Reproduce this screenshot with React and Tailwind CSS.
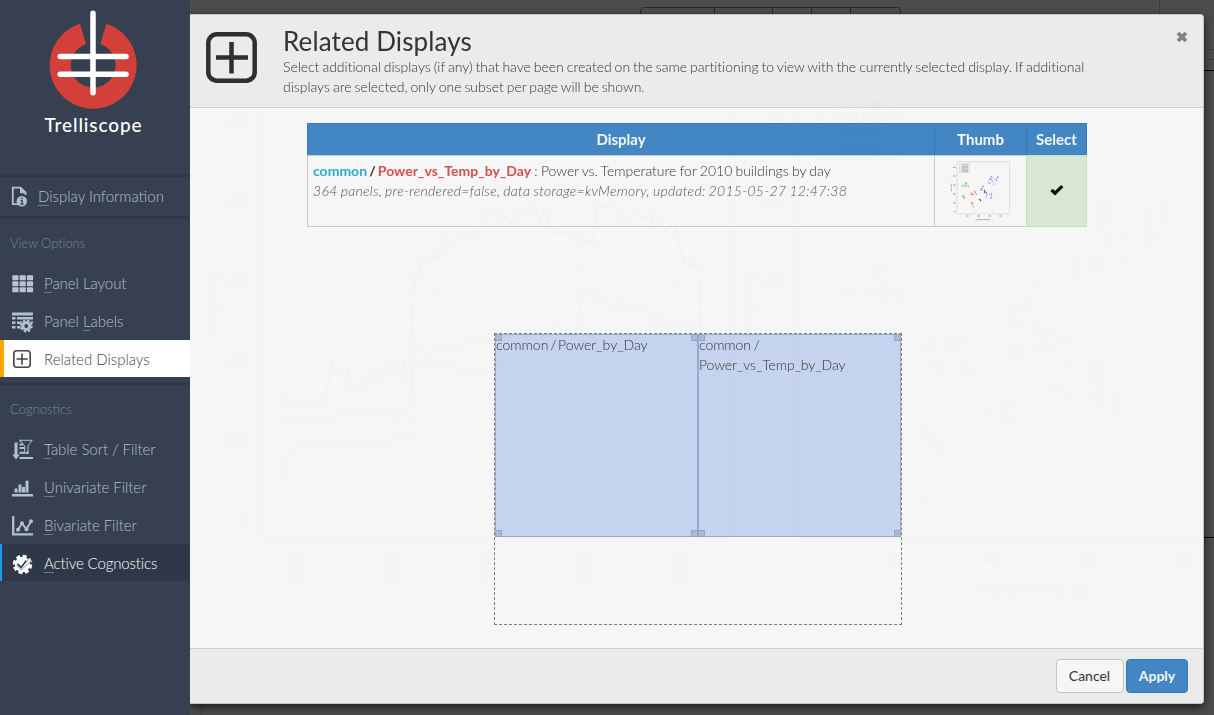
import React from 'react';

function Logo() {
  return (
    <svg width="190" height="140" viewBox="0 0 190 140" className="block">
      <path d="M80 23.8A43.5 43.5 0 1 0 106.300 23.8L100.300 43.900A22.5 22.5 0 1 1 86 43.900Z" fill="#d3403a" />
      <g stroke="#fff" strokeWidth="5.500" strokeLinecap="round">
        <path d="M93 13.200V92.700M60.200 56.600H126M60.200 74.300H126" />
      </g>
      <text x="44.500" y="132" fill="#fff" fontFamily="Lato, sans-serif" fontWeight="500" fontSize="19" textLength="97" lengthAdjust="spacing">Trelliscope</text>
    </svg>
  );
}

function PlusBox({ size, color, className }) {
  return (
    <svg width={size} height={size} viewBox="0 0 51 51" fill="none" stroke={color} className={className}>
      <rect x="2.300" y="2.300" width="46.400" height="46.400" rx="8.500" strokeWidth="4.500" />
      <path d="M25.500 10v31.500M10 25.600h32" strokeWidth="4.500" />
    </svg>
  );
}

const icons = {
  info: (
    <svg width="22" height="22" viewBox="0 0 22 22" className="block">
      <path d="M10 18.200H1.800V1.700H9.500L14.500 6.500V9" fill="none" stroke="#b3bfcf" strokeWidth="1.800" />
      <path d="M9 1.500V7.300H15Z" fill="#b3bfcf" />
      <circle cx="10.800" cy="15.300" r="5.200" fill="#b3bfcf" />
      <path d="M10.900 11.500v1.600M9.500 14.400h1.600v3.500M9.300 18.200h3.400" stroke="#364051" strokeWidth="1.300" fill="none" />
    </svg>
  ),
  grid: (
    <svg width="22" height="18" viewBox="0 0 22 18" className="block" fill="#b9c3d2">
      {[0, 6, 12].map((y) => [0, 7.3, 14.6].map((x) => <rect key={x + '-' + y} x={x + 0.3} y={y + 0.3} width="6.200" height="5" rx="0.900" />))}
    </svg>
  ),
  labels: (
    <svg width="23" height="22" viewBox="0 0 23 22" className="block">
      <g fill="#b3bfcf">
        <path d="M0 1.500h21v3H0zM0 6h3.500v2.500H0zM5 6h16v2.500H5zM0 10.500h3.500V13H0zM5 10.500h5V13H5zM17 10.500h4V12h-4zM0 15h3.500v2.500H0zM5 15h3.500v2.500H5z" />
      </g>
      <circle cx="14.300" cy="15" r="5.600" fill="#364051" />
      <circle cx="14.300" cy="15" r="3.500" fill="none" stroke="#b3bfcf" strokeWidth="3.200" />
      <circle cx="14.300" cy="15" r="5.400" fill="none" stroke="#b3bfcf" strokeWidth="2.200" strokeDasharray="2.300 1.941" />
    </svg>
  ),
  sort: (
    <svg width="22" height="22" viewBox="0 0 22 22" className="block">
      <path d="M4 3.500V16" stroke="#b3bfcf" strokeWidth="3" />
      <path d="M.3 15.500H7.700L4 20.500z" fill="#b3bfcf" />
      <path d="M7.500 1.800h2M7.500 5.500h3.500M7.500 9h6M7.500 13.700h9.500M7.500 19h13.500" stroke="#b3bfcf" strokeWidth="2" />
      <path d="M8 1.300H20.200L16 7V12.500L12.700 14.500V7Z" fill="#364051" stroke="#b3bfcf" strokeWidth="1" />
    </svg>
  ),
  bars: (
    <svg width="22" height="18" viewBox="0 0 22 18" className="block" fill="#b3bfcf">
      <path d="M0 15h21v2.500H0zM2.500 9.500h3V13.500h-3zM6.500 5.500h3v8h-3zM10 8h3v5.500h-3zM13.500 1.800h3v11.700h-3z" />
    </svg>
  ),
  line: (
    <svg width="22" height="22" viewBox="0 0 22 22" className="block" fill="none" stroke="#b3bfcf">
      <path d="M1.200 1V19.300H21" strokeWidth="2.300" />
      <path d="M6 14.500L10 8.500L14.500 14L19 6.500" strokeWidth="1.900" />
      <g fill="#b3bfcf" stroke="none"><circle cx="6" cy="14.800" r="2" /><circle cx="10" cy="8.300" r="2" /><circle cx="14.500" cy="14.300" r="2" /><circle cx="19" cy="6.300" r="2" /></g>
    </svg>
  ),
  badge: (
    <svg width="22" height="22" viewBox="0 -1 22 22" className="block">
      <circle cx="10.500" cy="10.500" r="7.700" fill="#fff" />
      <circle cx="10.500" cy="10.500" r="8" fill="none" stroke="#fff" strokeWidth="3.500" strokeDasharray="3.800 2.483" />
      <path d="M5.500 10.500L9.300 14.200L18 6" fill="none" stroke="#8b94a1" strokeWidth="3.400" />
      <path d="M5.500 10.500L9.300 14.200L18 6" fill="none" stroke="#fff" strokeWidth="1.800" />
      <path d="M5.300 10L9.200 13.500L14.200 6.600" fill="none" stroke="#2f3848" strokeWidth="1.600" />
    </svg>
  ),
};

function NavItem({ icon, pre = '', hot, post, active }) {
  return (
    <div className={active ? 'flex h-[37px] items-center border-l-2 border-[#1b9df0] bg-[#2f3848] pl-[10px] pt-[2px] text-white' : 'flex h-[38px] items-center pl-[12px] text-[#b3bfcf]'}>
      <span className="flex w-[32px] shrink-0 items-center">{icons[icon]}</span>
      <span className={active ? 'whitespace-nowrap text-[15px] leading-[17px] tracking-[-0.12px]' : 'whitespace-nowrap pb-[2px] text-[15px] leading-[17px] tracking-[-0.04px]'}>
        {pre}
        <span className="border-b border-[#6f7b8d]">{hot}</span>
        {post}
      </span>
    </div>
  );
}

function Sidebar() {
  return (
    <aside className="flex w-[190px] shrink-0 flex-col bg-[#364051] font-light">
      <div className="h-[174px]"><Logo /></div>
      <div className="h-[3px] rounded-l bg-[#2f3848]" />
      <div className="flex h-[39px] items-center pl-[11px] text-[#b3bfcf]">
        <span className="w-[27px] shrink-0">{icons.info}</span>
        <span className="whitespace-nowrap text-[15px] leading-[17px]"><span className="border-b border-[#6f7b8d]">D</span>isplay Information</span>
      </div>
      <div className="h-[3px] bg-[#2f3848]" />
      <div className="flex h-[46px] items-center pl-[10px] pt-[4px] text-[13px] tracking-[-0.06px] text-[#77869b]">View Options</div>
      <NavItem icon="grid" hot="P" post="anel Layout" />
      <NavItem icon="labels" pre="Panel " hot="L" post="abels" />
      <div className="mt-[-1px] flex h-[37px] items-center border-l-4 border-[#ffa500] bg-white pl-[9px] pt-px text-[15px] text-[#444]">
        <PlusBox size={18} color="#444" className="mr-[13px] block" />
        Related Displays
      </div>
      <div className="mt-[5px] h-[3px] bg-[#2f3848]" />
      <div className="flex h-[46px] items-center pl-[10px] pt-[4px] text-[13px] text-[#77869b]">Cognostics</div>
      <NavItem icon="sort" hot="T" post="able Sort / Filter" />
      <NavItem icon="bars" hot="U" post="nivariate Filter" />
      <NavItem icon="line" hot="B" post="ivariate Filter" />
      <div className="-mt-px"><NavItem icon="badge" hot="A" post="ctive Cognostics" active /></div>
    </aside>
  );
}

const blueLine = '268,655 300,670 315,678 330,660 340,679 370,668 402,668 428,546 458,583 473,568 487,632 517,632 530,612 545,563 560,572 572,600 602,543 615,557 632,592 643,540 658,547 673,300 703,238 718,234 746,234 760,174 775,174 788,195 803,180 816,156 832,157 848,172 889,95 903,101 918,101 933,114 947,106 962,131 977,115 990,93 1019,93 1034,71 1048,122 1062,93 1092,161 1152,161 1163,178 1208,188 1221,75 1237,85 1252,75 1266,73 1292,109 1308,120 1337,95 1352,115 1382,104 1394,143 1408,114 1424,156 1453,130 1481,248 1496,255 1510,250 1527,285 1535,470';
const greenLine = '268,657 302,657 318,670 428,661 444,646 460,648 474,636 498,630 514,610 530,617 573,603 632,605 660,570 670,600 672,330 685,338 718,340 733,323 745,347 760,338 876,338 891,345 906,342 921,350 951,345 966,340 977,345 1007,335 1022,345 1037,342 1077,355 1108,355 1138,361 1163,258 1180,252 1213,270 1228,270 1245,255 1264,262 1290,255 1306,238 1320,260 1395,265 1440,290 1455,312 1467,312 1475,440 1530,445';
const blackLine = '268,716 290,718 343,725 385,725 402,713 430,724 458,686 486,690 500,693 516,683 543,695 571,693 587,702 602,691 616,717 632,702 642,705 657,677 672,505 687,515 717,521 732,511 762,507 775,491 789,504 818,500 833,470 848,492 861,488 890,475 910,483 960,470 980,453 1010,475 1035,447 1055,470 1080,458 1105,432 1130,463 1158,455 1178,323 1195,330 1222,348 1235,370 1278,377 1295,368 1305,375 1337,372 1350,386 1366,386 1380,400 1394,437 1409,413 1424,430 1468,425 1490,442 1530,446';
const redLine = '268,885 283,885 298,805 345,800 360,786 430,794 455,807 470,797 560,799 572,795 588,799 600,792 617,756 642,783 660,772 673,562 718,557 730,551 745,557 778,561 788,555 810,572 850,567 885,571 930,560';

const scatter = [
  ['#00f', [[1237, 90], [1246, 74], [1234, 104], [1246, 112], [1234, 120], [1234, 145], [1180, 129], [1180, 155], [1180, 176], [1260, 159], [1247, 187], [1260, 173], [1300, 174], [1300, 234], [1219, 236], [1219, 265], [1219, 298], [1153, 249], [1153, 280], [1378, 95], [1378, 131], [1416, 70], [1416, 99], [1416, 128], [1430, 108], [1366, 159], [1366, 196], [1380, 177], [1388, 160], [1129, 555], [1129, 643], [1099, 682], [1099, 622], [1234, 545], [1219, 570], [1206, 590], [1219, 592], [1234, 613], [1206, 632], [1219, 648], [1234, 669], [1219, 680], [1273, 658], [1273, 682], [1206, 545], [1206, 560], [1206, 612]]],
  ['#090', [[558, 236], [572, 258], [558, 268], [558, 285], [573, 315], [573, 364], [585, 347], [465, 337], [478, 337], [478, 349], [531, 341], [540, 349], [546, 336], [615, 337], [623, 348], [627, 358], [565, 272]]],
  ['#f00', [[696, 508], [717, 480], [717, 495], [738, 490], [780, 488], [780, 495], [801, 476], [801, 493], [812, 464], [812, 478], [833, 488], [732, 557], [740, 568], [758, 554], [758, 575], [812, 565], [820, 573], [831, 560], [842, 571], [696, 733], [696, 757], [717, 754], [717, 783], [696, 826], [738, 799], [746, 803], [757, 797], [749, 808], [758, 1016]]],
  ['#000', [[1039, 323], [1039, 344], [1039, 366], [1006, 366], [1006, 377], [1006, 390], [968, 388], [968, 414], [968, 439], [984, 427], [977, 507], [977, 522], [1039, 437], [1048, 463], [1060, 434], [1060, 454], [1070, 474], [1060, 492], [1079, 503], [1079, 457], [1120, 476], [1120, 492], [1048, 506], [905, 689], [905, 706], [935, 683], [935, 699], [956, 674], [950, 708], [956, 720], [947, 726], [696, 956]]],
];

function PlotPage() {
  return (
    <svg width="1024" height="715" viewBox="190 0 1024 715" className="absolute inset-0" fontFamily="Liberation Sans, sans-serif" fontSize="12">
      <text x="207" y="31" fontFamily="Lato, sans-serif" fontWeight="300" fontSize="18" fill="#777">common / Power_by_Day</text>
      <g fill="none" stroke="#ccc">
        <rect x="640.500" y="7.500" width="260" height="32" rx="3" stroke="#888" />
        <path d="M714.500 8v32M772.500 8v32M811.500 8v32M850.500 8v32" stroke="#888" />
        <path d="M1159.500 0V49M1203 49.500h11M1203 59.500h11M201.500 703V715" />
      </g>
      <g fontFamily="Lato, sans-serif" fontSize="14" fill="#777">
        <text x="654" y="29">1</text>
        <text x="727" y="29">/ 364</text>
        <text x="863" y="29">1x ▾</text>
      </g>
      <path d="M797 24h-9M791 19.500l-4.500 4.500 4.500 4.500M824 24h9M830 19.500l4.500 4.500-4.500 4.500" fill="none" stroke="#777" strokeWidth="2.500" />
      <g fill="none" stroke="#000">
        <path d="M262.500 537.500V70.500H729.500V537.500ZM1214 70.500H799.500V537.500H1214" />
        <path d="M255 121.500h7M255 201.500h7M255 281.500h7M255 360.500h7M255 440.500h7M255 520.500h7M792 121.500h7M792 201.500h7M792 281.500h7M294.500 537v7M390.500 537v7M486.500 537v7M582.500 537v7M678.500 537v7M893.500 537v7M991.500 537v7M1087.500 537v7M1185.500 537v7" />
        <rect x="816.500" y="87.500" width="81" height="72" />
      </g>
      {[500, 400, 300, 200, 100, 0].map((v, i) => (
        <g key={v} textAnchor="end">
          <text x="248" y={127 + i * 79.8}>{v}</text>
          {i < 3 && <text x="784" y={127 + i * 79.8}>{v}</text>}
        </g>
      ))}
      <g textAnchor="middle">
        <text transform="translate(217 304) rotate(-90)">Power (KW)</text>
        <text transform="translate(753 304) rotate(-90)">Power (KW)</text>
        {['02:00', '07:00', '12:00', '17:00', '22:00'].map((t, i) => (
          <text key={t} transform={`translate(${300 + i * 96} 566) rotate(-90)`}>{t}</text>
        ))}
        <text x="893" y="564">20</text><text x="990" y="564">40</text><text x="1087" y="564">60</text><text x="1185" y="564">80</text>
        <text x="1032" y="593">Outside Air Temp (F)</text>
      </g>
      {[2, 3, 4, 5].map((n, i) => (
        <g key={n}>
          <circle cx="827" cy={101.5 + i * 15} r="2.300" fill="none" stroke={['#000', '#f00', '#090', '#00f'][i]} />
          <text x="838" y={107 + i * 14.7}>Building {n}</text>
        </g>
      ))}
      <g transform="translate(190 180) scale(.33333)" fill="none" strokeWidth="4">
        <polyline points={blueLine} stroke="#00f" strokeWidth="5" />
        <polyline points={greenLine} stroke="#a8dca8" />
        <polyline points={blackLine} stroke="#666" strokeWidth="5" />
        <polyline points={redLine} stroke="#f00" />
      </g>
      <g transform="translate(690 180) scale(.33333)" fill="none" strokeWidth="2.500">
        {scatter.map(([c, pts]) => pts.map(([x, y]) => <circle key={x + ',' + y} cx={x} cy={y} r="7" stroke={c} />))}
      </g>
    </svg>
  );
}

const thumbDots = [
  ['#3fbf3f', [[135, 205], [138, 206], [137, 209], [127, 214], [131, 213], [135, 214], [139, 214], [144, 215], [126, 245], [129, 247], [130, 243], [134, 248], [131, 252]]],
  ['#f04040', [[163, 231], [165, 233], [154, 235], [152, 239], [160, 239], [168, 239], [155, 240], [154, 264], [157, 266], [155, 269], [159, 276]]],
  ['#222', [[188, 215], [185, 222], [182, 226], [192, 227], [193, 231], [198, 233], [192, 233], [177, 254], [180, 256], [181, 258]]],
  ['#7070ff', [[213, 186], [215, 189], [210, 192], [213, 196], [207, 195], [205, 204], [209, 205], [217, 200], [220, 208], [222, 194], [228, 193], [232, 189], [233, 186], [229, 197], [198, 247], [201, 240], [209, 239], [213, 236], [213, 243], [211, 249], [214, 251], [197, 237]]],
];

function Thumb() {
  return (
    <svg width="70" height="70" viewBox="80 127 210 210" className="block">
      <rect x="110" y="141" width="158" height="157" rx="3" fill="#fff" stroke="#e6e6e6" strokeWidth="3" />
      <rect x="117" y="147" width="30" height="27" fill="#f2f2f2" stroke="#e0e0e0" strokeWidth="2" />
      <path d="M124 151h19M124 155h19M124 159h19M124 163h19M124 167h19M124 171h19" stroke="#aaa" strokeWidth="2" />
      <path d="M99 158h6M99 184h6M99 211h6M99 238h6M99 265h6M101 291h4M139 304h6M172 304h6M205 304h6M237 304h6" stroke="#777" strokeWidth="2.500" />
      <path d="M169 315h40" stroke="#999" strokeWidth="3" strokeDasharray="4 1.500" />
      <path d="M93 207v24" stroke="#aaa" strokeWidth="3" strokeDasharray="3 1" />
      {thumbDots.map(([c, pts]) => pts.map(([x, y]) => <rect key={x + ',' + y} x={x - 1.5} y={y - 1.5} width="3" height="3" fill={c} />))}
    </svg>
  );
}

function Panel({ children, className }) {
  const handle = 'absolute h-[7px] w-[7px] border border-[#9ba9cc] bg-[#b0bfdf]';
  return (
    <div className={'relative h-[203px] w-[203px] border border-[#9fadd0] bg-[#ccdbf7] text-[14px] font-light leading-5 text-[#333] ' + className}>
      <span className={handle + ' -left-px -top-px'} />
      <span className={handle + ' -right-px -top-px'} />
      <span className={handle + ' -bottom-px -left-px'} />
      <span className={handle + ' -bottom-px -right-px'} />
      <span className="relative block">{children}</span>
    </div>
  );
}

function Dialog() {
  return (
    <section className="relative mb-[11px] mr-[10px] mt-[14px] flex flex-1 flex-col overflow-hidden rounded-r-[4px] border-y border-r border-[#ccc] bg-white text-[#333] opacity-95 shadow-[0_3px_9px_rgba(0,0,0,0.7)]">
      <header className="flex h-[93px] shrink-0 border-b border-[#d6d6d6] bg-[#f4f4f4] pl-[16px] pt-[17px]">
        <PlusBox size={51} color="#2e2e2e" className="shrink-0" />
        <div className="ml-[26px] w-[820px]">
          <h1 className="mt-[-7px] text-[26px] leading-[32px] tracking-[0.12px]">Related Displays</h1>
          <p className="w-[815px] text-[14px] font-light leading-5 tracking-[-0.02px] [word-spacing:-0.78px]">Select additional displays (if any) that have been created on the same partitioning to view with the currently selected display. If additional displays are selected, only one subset per page will be shown.</p>
        </div>
        <svg width="12" height="12" viewBox="0 0 12 12" className="ml-[73px] mt-[-1px] shrink-0"><path d="M2 2L10 10M10 2L2 10" stroke="#858585" strokeWidth="3.800" /></svg>
      </header>
      <div className="flex flex-1 flex-col items-start">
        <div className="ml-[117px] mt-[15px] w-[780px]">
          <div className="flex h-[32px] border border-b-0 border-[#357ebd] bg-[#428bca] text-center text-[15px] font-bold leading-[31px] text-white">
            <div className="w-[626px]">Display</div>
            <div className="w-[92px] border-l border-[#357ebd]">Thumb</div>
            <div className="w-[60px] border-l border-[#357ebd]">Select</div>
          </div>
          <div className="flex h-[72px] border border-r-0 border-[#d0d0d0]">
            <div className="w-[626px] pl-[5px] pt-[5px] text-[14px] font-light leading-5">
              <div><span className="font-bold [word-spacing:-1.300px]"><span className="text-[#31b0d5]">common</span> / <span className="text-[#d9534f]">Power_vs_Temp_by_Day</span></span><span className="[word-spacing:-0.600px]"> : Power vs. Temperature for 2010 buildings by day</span></div>
              <div className="italic tracking-[0.28px] text-[#555] [word-spacing:-0.700px]">364 panels, pre-rendered=false, data storage=kvMemory, updated: 2015-05-27 12:47:38</div>
            </div>
            <div className="w-[92px] border-l border-[#d0d0d0] pl-[12px] pt-px"><Thumb /></div>
            <div className="-my-px flex w-[61px] items-center justify-center border border-[#cbe6cb] bg-[#dff0d8]">
              <svg width="14" height="12" viewBox="0 0 14 12" className="mb-[2px]"><path d="M1.500 6L5 9.200L12.300 2.200" fill="none" stroke="#000" strokeWidth="3.200" /></svg>
            </div>
          </div>
        </div>
        <div className="ml-[304px] mt-[106px] flex h-[292px] w-[408px] items-start border border-dashed border-[#808080]">
          <Panel className="[word-spacing:-2px]">common / Power_by_Day</Panel>
          <Panel className="tracking-[-0.06px] [word-spacing:-1px]">common / Power_vs_Temp_by_Day</Panel>
        </div>
      </div>
      <footer className="flex h-[55px] shrink-0 items-start justify-end gap-[2px] border-t border-[#d6d6d6] bg-[#f4f4f4] pr-[15px] pt-[10px] text-[14px]">
        <button className="h-[34px] w-[68px] rounded border border-[#ccc] bg-white pb-px pr-px">Cancel</button>
        <button className="h-[34px] w-[62px] rounded border border-[#357ebd] bg-[#428bca] pb-px font-bold text-white">Apply</button>
      </footer>
    </section>
  );
}

export default function App() {
  return (
    <div className="flex h-[715px] w-[1214px] overflow-hidden bg-white font-['Lato',sans-serif]">
      <Sidebar />
      <main className="relative flex flex-1 overflow-hidden">
        <PlotPage />
        <div className="absolute inset-0 bg-black/70" />
        <Dialog />
      </main>
    </div>
  );
}
